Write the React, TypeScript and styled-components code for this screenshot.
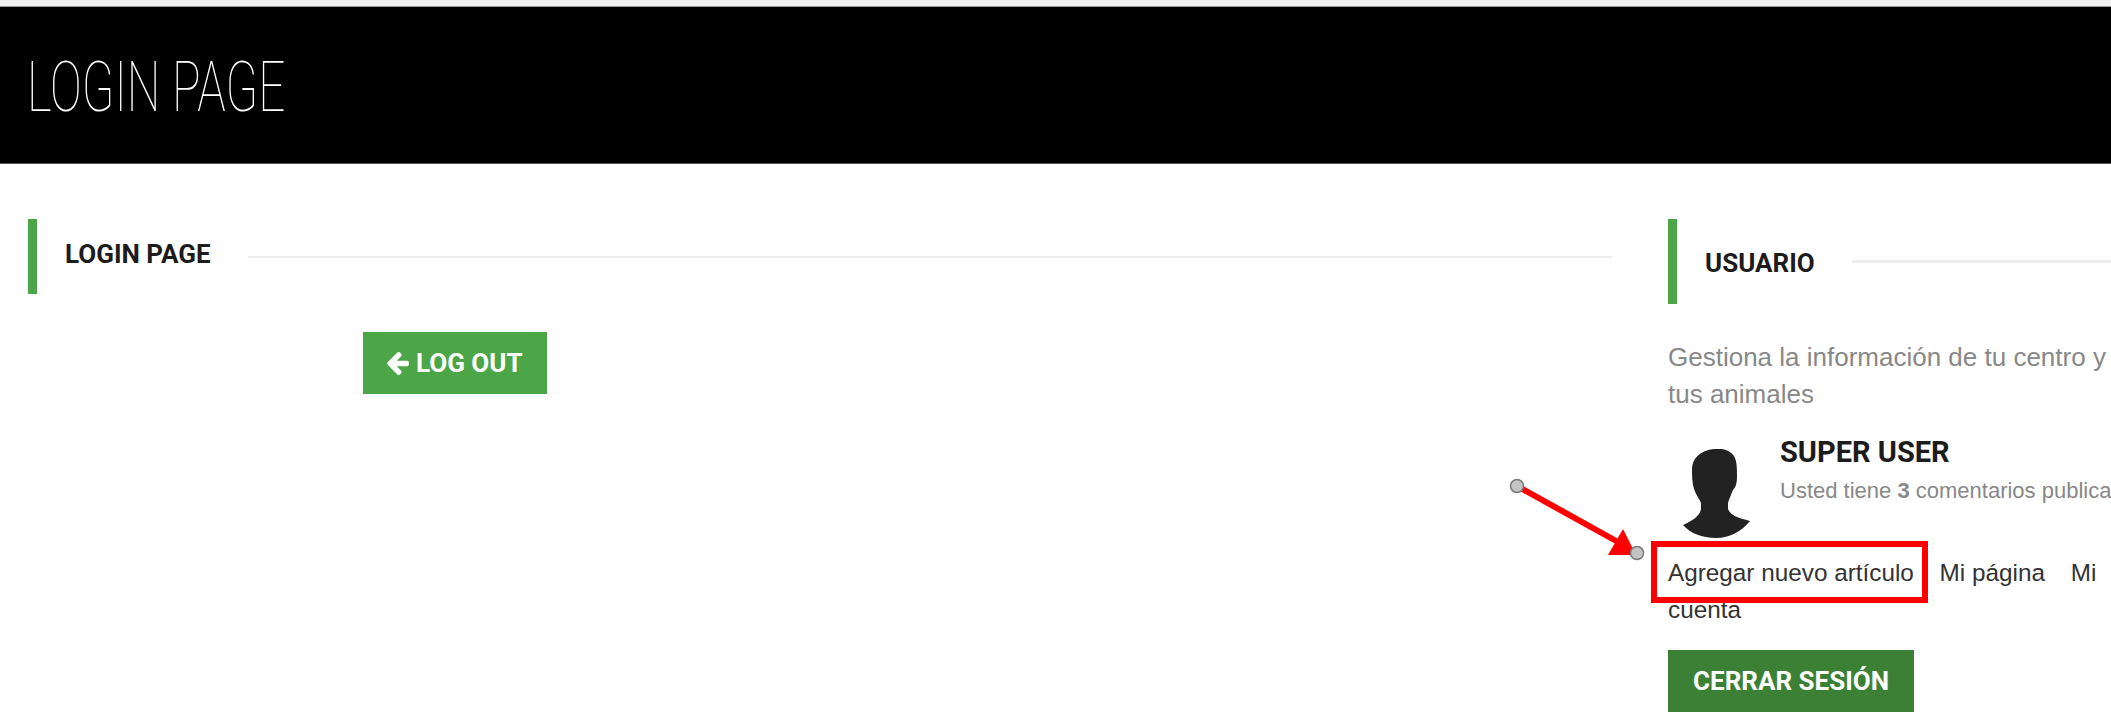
import { createGlobalStyle } from "styled-components";
import styled from "styled-components";

const GlobalStyle = createGlobalStyle`
  html, body {
    margin: 0;
    padding: 0;
    height: 723px;
    overflow: hidden;
    background: #fff;
  }
  body {
    font-family: "Liberation Sans", Arial, sans-serif;
  }
`;

const Page = styled.div`
  position: relative;
  width: 2111px;
  height: 723px;
  overflow: hidden;
`;

const TopStrip = styled.div`
  height: 6px;
  background: #f0f0f0;
  border-bottom: 1px solid #9a9a9a;
`;

const Banner = styled.header`
  height: 152px;
  background: #000;
  border-bottom: 1px solid #555;
  padding: 4px 0 0 27px;
  display: flex;
  align-items: center;
`;

const BannerTitle = styled.h1`
  margin: 0;
  font-family: Roboto, sans-serif;
  font-weight: 100;
  font-size: 70px;
  line-height: 1;
  color: #fff;
  white-space: nowrap;
  transform: scaleX(0.68);
  transform-origin: left center;
`;

const Columns = styled.div`
  display: grid;
  grid-template-columns: 1584px 600px;
  column-gap: 56px;
  padding: 55px 0 0 28px;
`;

const SectionHead = styled.div<{ $height: number }>`
  display: flex;
  align-items: center;
  height: ${(p) => p.$height}px;
  border-left: 9px solid #4ca648;
  padding-left: 28px;
`;

const SectionTitle = styled.h2<{ $lift: number }>`
  margin: 0 0 ${(p) => p.$lift}px;
  font-family: Roboto, sans-serif;
  font-weight: 700;
  font-size: 26px;
  color: #1c1c1c;
  white-space: nowrap;
  text-transform: uppercase;
`;

const SectionRule = styled.div<{ $thick: number }>`
  flex: 1;
  height: ${(p) => p.$thick}px;
  background: #eeeeee;
  margin-left: 37px;
`;

const LogoutRow = styled.div`
  padding: 38px 0 0 335px;
`;

const SolidButton = styled.button<{ $tone: string; $pad: number }>`
  display: inline-flex;
  align-items: center;
  justify-content: center;
  gap: 7px;
  height: 62px;
  padding: 0 ${(p) => p.$pad}px;
  border: 0;
  border-radius: 0;
  background: ${(p) => p.$tone};
  color: #fff;
  font-family: Roboto, sans-serif;
  font-weight: 700;
  font-size: 26px;
  white-space: nowrap;
`;

const Intro = styled.p`
  margin: 35px 0 0;
  width: 445px;
  font-size: 26px;
  line-height: 37px;
  color: #888;
`;

const Profile = styled.div`
  display: flex;
  margin-top: 25px;
  height: 116px;
`;

const AvatarBox = styled.div`
  width: 112px;
  padding: 11px 0 0 15px;
  box-sizing: border-box;
`;

const ProfileName = styled.div`
  font-family: Roboto, sans-serif;
  font-weight: 700;
  font-size: 29px;
  color: #1c1c1c;
  line-height: 28px;
`;

const ProfileNote = styled.div`
  margin-top: 12px;
  font-size: 22px;
  line-height: 25px;
  color: #888;
  white-space: nowrap;
`;

const LinkList = styled.div`
  width: 445px;
  font-size: 24.3px;
  line-height: 37px;
  color: #333;
`;

const LinkItem = styled.a`
  margin-right: 19px;
`;

const LogoutBlock = styled.div`
  margin-top: 22px;
`;

const Annotation = styled.svg`
  position: absolute;
  inset: 0;
  pointer-events: none;
`;

export default function App() {
  return (
    <Page>
      <GlobalStyle />
      <TopStrip />
      <Banner>
        <BannerTitle>LOGIN PAGE</BannerTitle>
      </Banner>
      <Columns>
        <main>
          <SectionHead $height={75}>
            <SectionTitle $lift={5}>Login Page</SectionTitle>
            <SectionRule $thick={2} />
          </SectionHead>
          <LogoutRow>
            <SolidButton $tone="#4ca648" $pad={24}>
              <svg width="22" height="23" viewBox="64 21 1472 1559">
                <path
                  fill="#fff"
                  d="M1536 736v128q0 53-32.5 90.5t-84.5 37.5h-704l293 294q38 36 38 90t-38 90l-75 76q-38 38-90 38-53 0-91-38l-651-652q-37-37-37-90 0-52 37-91l651-650q38-38 91-38 52 0 90 38l75 74q38 38 38 91t-38 91l-293 293h704q52 0 84.5 37.5t32.5 90.5z"
                />
              </svg>
              LOG OUT
            </SolidButton>
          </LogoutRow>
        </main>
        <aside>
          <SectionHead $height={85}>
            <SectionTitle $lift={-2}>Usuario</SectionTitle>
            <SectionRule $thick={3} />
          </SectionHead>
          <Intro>Gestiona la información de tu centro y tus animales</Intro>
          <Profile>
            <AvatarBox>
              <svg width="67" height="89" viewBox="13 8 67 89">
                <path
                  fill="#222"
                  d="M44 8C52 7 60 9 64 15C67 20 67 28 67 35C67 42 66 46 63 49C61 54 59 58 58 62L58 68C60 74 68 77 80 80C72 90 60 97 46 97C32 97 20 92 13 84C22 80 30 75 31 68L31 62C29 57 26 54 24 48C22 42 22 34 22 28C22 18 30 9 44 8Z"
                />
              </svg>
            </AvatarBox>
            <div>
              <ProfileName>SUPER USER</ProfileName>
              <ProfileNote>
                Usted tiene <b>3</b> comentarios publicados
              </ProfileNote>
            </div>
          </Profile>
          <LinkList>
            <LinkItem>Agregar nuevo artículo</LinkItem> <LinkItem>Mi página</LinkItem>{" "}
            <LinkItem>Mi cuenta</LinkItem>
          </LinkList>
          <LogoutBlock>
            <SolidButton $tone="#3b8035" $pad={25}>CERRAR SESIÓN</SolidButton>
          </LogoutBlock>
        </aside>
      </Columns>
      <Annotation width="2111" height="723" viewBox="0 0 2111 723">
        <rect x="1654" y="544" width="271" height="56" fill="none" stroke="#ff0000" strokeWidth="6" />
        <line x1="1517" y1="486" x2="1618" y2="542" stroke="#ff0000" strokeWidth="6" />
        <polygon points="1623,529 1608,555 1636,555" fill="#ff0000" />
        <circle cx="1517" cy="486" r="6.5" fill="#c4c4c4" stroke="#7a7a7a" strokeWidth="1.5" />
        <circle cx="1637" cy="553" r="6.5" fill="#c4c4c4" stroke="#7a7a7a" strokeWidth="1.5" />
      </Annotation>
    </Page>
  );
}
